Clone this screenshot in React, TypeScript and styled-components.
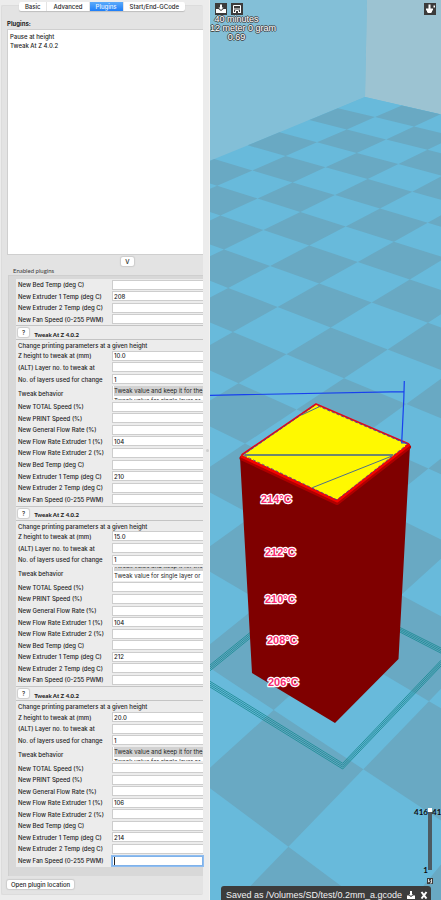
import React, { useId } from 'react';
import styled, { createGlobalStyle, css } from 'styled-components';

const GlobalStyle = createGlobalStyle`
  *, *::before, *::after { box-sizing: border-box; }
  body { margin: 0; background: #ececec; }
  button, input { font: inherit; color: inherit; margin: 0; }
`;

const Window = styled.div`
  display: grid;
  grid-template-columns: 10fr 11fr;
  min-height: 100vh;
  overflow: hidden;
  font-family: Inter, 'Open Sans', sans-serif;
  font-size: 6px;
  font-weight: 500;
  line-height: 9px;
  color: #1c1c1c;
`;

/* ---------- settings side ---------- */

const Settings = styled.aside`
  display: grid;
  grid-template-columns: 1fr 6px;
  min-width: 0;
  background: #ececec;
  border-right: 1px solid #f4f2f0;
`;

const Sash = styled.div`
  display: flex;
  align-items: center;
  justify-content: flex-end;
  &::after {
    content: '';
    width: 3px;
    height: 3px;
    border-radius: 50%;
    background: #cfcfcf;
  }
`;

const Notebook = styled.div`
  display: flex;
  flex-direction: column;
  min-width: 0;
  padding: 2px 0 5px 1px;
`;

const TabBar = styled.div`
  display: flex;
  align-self: center;
  height: 9px;
  margin-bottom: -6px;
  z-index: 1;
  border-radius: 2px;
  background: #fff;
  box-shadow: 0 1px 1px #bdbdbd;
`;

const Tab = styled.button<{ $active?: boolean }>`
  border: 0;
  padding: 0 6px;
  background: ${p => (p.$active ? 'linear-gradient(#5cabfa, #1e7ef8)' : 'transparent')};
  color: ${p => (p.$active ? '#e8f3ff' : '#262626')};
  white-space: nowrap;
  line-height: 9px;
  & + & { border-left: 1px solid #e4e4e4; }
  &:first-child { border-radius: 2px 0 0 2px; }
`;

const Page = styled.div`
  flex: 1;
  display: flex;
  flex-direction: column;
  padding: 13px 0 5px 5px;
  border-radius: 2px;
  border: 1px solid #dcdcdc;
  border-right: 0;
  background: #e3e3e3;
`;

const Heading = styled.div`
  font-size: 6px;
  font-weight: 700;
  line-height: 9px;
`;

const PluginList = styled.ul`
  list-style: none;
  margin: 1px 0 0;
  padding: 2px 2px;
  flex: 1;
  min-height: 224px;
  border: 1px solid #cfcfcf;
  border-right: 0;
  background: #fff;
`;

const MacButton = styled.button`
  border: 0;
  border-radius: 2px;
  padding: 0 4px;
  height: 9px;
  line-height: 9px;
  background: #fff;
  box-shadow: 0 0 1px 1px #cdcdcd;
  white-space: nowrap;
`;

const AddRow = styled.div`
  display: flex;
  justify-content: center;
  padding: 2px 0 0 45px;
`;

const Caption = styled.div`
  padding-left: 6px;
  font: 6px/9px Lato, sans-serif;
  color: #3a3a3a;
`;

const EnabledBox = styled.div`
  margin-left: 1px;
  padding: 3px 0 9px 7px;
  border: 1px solid #cfcfcf;
  border-width: 1px 0 0 1px;
  background: #d8d8d8;
`;

const Scrolled = styled.div`
  background: #ececec;
`;

const Sections = styled.div`
  display: grid;
  grid-template-rows: repeat(3, 1fr);
  height: 542px;
`;

const FieldStack = styled.div<{ $rows: number; $height: number }>`
  display: grid;
  grid-template-rows: repeat(${p => p.$rows}, 1fr);
  height: ${p => p.$height}px;
`;

const FieldRow = styled.div`
  display: grid;
  grid-template-columns: 96px 1fr;
  min-height: 0;
  align-items: center;
`;

const FieldLabel = styled.label`
  padding-left: 2px;
  white-space: nowrap;
`;

const Field = styled.input<{ $focused?: boolean }>`
  width: 100%;
  min-width: 0;
  height: 10px;
  padding: 0 1px;
  border: 1px solid #cdcdcd;
  border-right: 0;
  background: #fff;
  outline: 0;
  line-height: 8px;
  ${p => p.$focused && css`
    border: 1px solid #7fb2ea;
    box-shadow: 0 0 0 1px #8fbdf0;
    background: linear-gradient(#222, #222) 1px center / 1px 8px no-repeat #fff;
  `}
`;

const Section = styled.section`
  border-top: 1px solid #c4c4c4;
`;

const SectionTitle = styled.div`
  display: flex;
  align-items: center;
  gap: 5px;
  height: 14px;
  padding: 0 2px;
  border-bottom: 1px solid #c4c4c4;
`;

const SectionName = styled.span`
  padding-top: 3px;
  font: 900 6px/9px Lato, sans-serif;
`;

const Description = styled.div`
  height: 10px;
  padding-left: 2px;
  line-height: 12px;
  white-space: nowrap;
`;

const BehaviorRow = styled(FieldRow)`
  height: 16px;
`;

const Choices = styled.ul<{ $atEnd?: boolean }>`
  display: flex;
  flex-direction: column;
  justify-content: ${p => (p.$atEnd ? 'flex-end' : 'flex-start')};
  height: 14px;
  margin: 0;
  padding: 0 0 0 1px;
  list-style: none;
  overflow: hidden;
  min-width: 0;
  background: #fff;
  border-left: 1px solid #cdcdcd;
`;

const Choice = styled.li`
  flex: none;
  height: 10px;
  line-height: 10px;
  font-weight: 400;
  white-space: nowrap;
  &[aria-selected='true'] { background: #d2d2d2; }
`;

const Footer = styled.div`
  padding-top: 4px;
`;

/* ---------- 3D view side ---------- */

const Viewport = styled.main`
  position: relative;
  min-width: 0;
  display: flex;
  flex-direction: column;
  overflow: hidden;
  background: #68badb;
`;

const Scene = styled.svg`
  position: absolute;
  inset: 0;
  width: 100%;
  height: 100%;
`;

const Tools = styled.div`
  position: relative;
  display: flex;
  gap: 4px;
  padding: 3px 5px 0;
`;

const ToolButton = styled.button<{ $end?: boolean }>`
  width: 12px;
  height: 12px;
  padding: 0;
  border: 0;
  background: #3b3b3b;
  margin-left: ${p => (p.$end ? 'auto' : '0')};
  svg { display: block; width: 12px; height: 12px; }
`;

const Stats = styled.div`
  position: relative;
  width: 53px;
  display: flex;
  flex-direction: column;
  align-items: center;
  font: 9px/9px 'Liberation Sans', sans-serif;
  color: #fff;
  white-space: nowrap;
  text-shadow: 1px 0 #444, -1px 0 #444, 0 1px #444, 0 -1px #444;
`;

const WideStat = styled.span`
  align-self: flex-start;
`;

const Spacer = styled.div`
  flex: 1;
`;

const Layers = styled.div`
  position: relative;
  display: grid;
  grid-template-columns: 14px 4px 14px;
  align-self: flex-end;
  height: 66px;
  margin: 0 -5px 4px 0;
  font: 700 8px/8px Lato, sans-serif;
  color: #0c0c0c;
`;

const LayerNumbers = styled.div`
  display: flex;
  flex-direction: column;
  justify-content: space-between;
  text-align: right;
`;

const LayerSlider = styled.input`
  appearance: none;
  writing-mode: vertical-lr;
  direction: rtl;
  width: 4px;
  height: 62px;
  background: #4d5b62;
  &::-webkit-slider-thumb {
    appearance: none;
    width: 4px;
    height: 4px;
    background: #fff;
  }
`;

const CameraButton = styled.button`
  position: relative;
  align-self: flex-end;
  width: 6px;
  height: 6px;
  margin: 0 8px 2px 0;
  padding: 0;
  border: 0;
  background: #3b3b3b;
  svg { display: block; width: 6px; height: 6px; }
`;

const Toast = styled.div`
  position: relative;
  display: flex;
  align-items: center;
  gap: 5px;
  height: 14px;
  margin: 0 10px 0 11px;
  padding: 4px 5px 0;
  border-radius: 3px 3px 0 0;
  background: #3c3c3c;
  color: #f2f2f2;
  font: 9px/10px 'Liberation Sans', sans-serif;
  white-space: nowrap;
`;

const ToastText = styled.span`
  flex: 1;
`;

const ToastButton = styled.button`
  border: 0;
  padding: 0;
  background: none;
  svg { display: block; width: 8px; height: 8px; }
`;

/* ---------- data ---------- */

const SPEED_FIELDS = [
  'New TOTAL Speed (%)',
  'New PRINT Speed (%)',
  'New General Flow Rate (%)',
  'New Flow Rate Extruder 1 (%)',
  'New Flow Rate Extruder 2 (%)',
];

const TEMP_FIELDS = [
  'New Bed Temp (deg C)',
  'New Extruder 1 Temp (deg C)',
  'New Extruder 2 Temp (deg C)',
  'New Fan Speed (0-255 PWM)',
];

type Tweak = { height: string; flow: string; temp: string; atEnd?: boolean; fanFocused?: boolean };

const TWEAKS: Tweak[] = [
  { height: '10.0', flow: '104', temp: '210' },
  { height: '15.0', flow: '104', temp: '212', atEnd: true },
  { height: '20.0', flow: '106', temp: '214', fanFocused: true },
];

/* ---------- settings components ---------- */

function FormField({ label, value = '', focused }: { label: string; value?: string; focused?: boolean }) {
  const id = useId();
  return (
    <FieldRow>
      <FieldLabel htmlFor={id}>{label}</FieldLabel>
      <Field id={id} type="text" defaultValue={value} $focused={focused} />
    </FieldRow>
  );
}

function TweakSection({ height, flow, temp, atEnd, fanFocused }: Tweak) {
  const id = useId();
  return (
    <Section>
      <SectionTitle>
        <MacButton type="button" aria-label="Help">?</MacButton>
        <SectionName>Tweak At Z 4.0.2</SectionName>
      </SectionTitle>
      <Description>Change printing parameters at a given height</Description>
      <FieldStack $rows={3} $height={35}>
        <FormField label="Z height to tweak at (mm)" value={height} />
        <FormField label="(ALT) Layer no. to tweak at" />
        <FormField label="No. of layers used for change" value="1" />
      </FieldStack>
      <BehaviorRow>
        <FieldLabel as="span" id={id}>Tweak behavior</FieldLabel>
        <Choices role="listbox" aria-labelledby={id} $atEnd={atEnd}>
          <Choice role="option" aria-selected="true">Tweak value and keep it for the</Choice>
          <Choice role="option" aria-selected="false">Tweak value for single layer or</Choice>
        </Choices>
      </BehaviorRow>
      <FieldStack $rows={9} $height={104}>
        {SPEED_FIELDS.map((label, i) => (
          <FormField key={label} label={label} value={i === 3 ? flow : ''} />
        ))}
        {TEMP_FIELDS.map((label, i) => (
          <FormField key={label} label={label} value={i === 1 ? temp : ''} focused={i === 3 && fanFocused} />
        ))}
      </FieldStack>
    </Section>
  );
}

/* ---------- scene ---------- */

// Perspective projection of floor grid coordinates, origin at the back corner.
function project(i: number, j: number) {
  const w = 1 - 0.024579 * i - 0.023001 * j;
  const x = (365 - 35.413 * i + 27.603 * j) / w;
  const y = (97 + 8.504 * i + 6.041 * j) / w;
  return `${x.toFixed(1)} ${y.toFixed(1)}`;
}

const quad = (i: number, j: number, w = 1, h = 1) =>
  `M${project(i, j)}L${project(i + w, j)}L${project(i + w, j + h)}L${project(i, j + h)}Z`;

const darkTiles: string[] = [];
for (let i = 0; i < 19; i++) {
  for (let j = 0; j < 15; j++) {
    if ((i + j) % 2) darkTiles.push(quad(i, j));
  }
}

const TEMPERATURES = [
  { text: '214°C', x: 261, y: 503 },
  { text: '212°C', x: 265, y: 556 },
  { text: '210°C', x: 265, y: 603 },
  { text: '208°C', x: 267, y: 644 },
  { text: '206°C', x: 268, y: 686 },
];

function PrintScene() {
  return (
    <Scene viewBox="210 0 231 900" preserveAspectRatio="xMidYMid slice" aria-label="Layer view">
      <path d="M-200 0H367L365 97L-200 334Z" fill="#83bfd7" />
      <path d="M367 0H900V220L365 97Z" fill="#9cc3d2" />
      <path d={quad(0, 0, 19, 15)} fill="#68badb" />
      <path d={darkTiles.join('')} fill="#69a9c3" />
      <g fill="none" stroke="#1f8c96" strokeWidth=".9">
        {[0, 1, 2, 3].map(n => {
          const o = n * 1.9;
          return (
            <path
              key={n}
              d={`M252 ${631 + o}L210 ${665 + o}M210 ${687 - o}L342.7 ${769 - o}L441 ${666 - o}M396 ${625.5 + o * 0.8}L441 ${648 + o * 0.9}`}
            />
          );
        })}
      </g>
      <path d="M240 457L337 503L410 446L398.5 659L335 723L252 673Z" fill="#7f0000" />
      <path d="M241.5 456.5L316 404.5L408.5 445L337 501Z" fill="#fff900" />
      <path d="M242 458L337 502.500L408.500 447" fill="none" stroke="#b00000" strokeWidth="5" strokeLinejoin="round" strokeLinecap="round" />
      <path d="M242 456.500L337 501L408.500 445" fill="none" stroke="#f20500" strokeWidth="3" strokeLinejoin="round" strokeLinecap="round" />
      <path d="M241.5 455L316 404L409 444" fill="none" stroke="#e00a18" strokeWidth="1.6" strokeLinejoin="round" />
      <path d="M244 455.500L337 499L405 446" fill="none" stroke="#fff900" strokeWidth="1" />
      <path d="M244 455.500L337 499.800L406 445.500M318 406L408 444.500M243 455L314 406" fill="none" stroke="#4836a0" strokeWidth=".8" strokeDasharray="3 2" />
      <g fill="none" stroke="#4d6f8a" strokeWidth="1">
        <path d="M319.300 406.700L301.700 415" />
        <path d="M392 456L312.300 487.700" />
        <path d="M245 455H393" stroke="#3f6290" strokeWidth="1.500" />
      </g>
      <path d="M210 395.300L404 391.700M404.300 381L403.800 399L401.700 443H406" fill="none" stroke="#1740ee" strokeWidth="1.200" />
      <g
        fontFamily="'Liberation Sans', sans-serif"
        fontWeight="700"
        fontSize="11"
        fill="#f82a70"
        stroke="#fff"
        strokeWidth="2.500"
        strokeLinejoin="round"
        paintOrder="stroke"
      >
        {TEMPERATURES.map(t => (
          <text key={t.text} x={t.x} y={t.y}>{t.text}</text>
        ))}
      </g>
    </Scene>
  );
}

const LoadIcon = () => (
  <svg viewBox="0 0 12 12" fill="#fff">
    <path d="M5 1.500h2v3h1.500L6 7 3.500 4.500H5zM1 6h2.500L6 8l2.500-2H11v4H1z" />
  </svg>
);

const SaveIcon = () => (
  <svg viewBox="0 0 12 12" fill="none" stroke="#fff">
    <path d="M2.500 10V2.500h7V10M4.500 10V7.500h3V10M3 6h6M2 9.500h3M7 9.500h3" />
  </svg>
);

const ViewIcon = () => (
  <svg viewBox="0 0 12 12" fill="#fff">
    <path d="M4.500 1.500h2v4h2.500v2H8v1.500L7 10H4L3 9V7.500H2v-2h2.500zM9.500 2.500h1.500v2H9.500z" />
  </svg>
);

export default function App() {
  return (
    <Window>
      <GlobalStyle />
      <Settings>
        <Notebook>
          <TabBar role="tablist">
            <Tab type="button" role="tab">Basic</Tab>
            <Tab type="button" role="tab">Advanced</Tab>
            <Tab type="button" role="tab" aria-selected="true" $active>Plugins</Tab>
            <Tab type="button" role="tab">Start/End-GCode</Tab>
          </TabBar>
          <Page>
            <Heading>Plugins:</Heading>
            <PluginList>
              <li>Pause at height</li>
              <li>Tweak At Z 4.0.2</li>
            </PluginList>
            <AddRow><MacButton type="button">V</MacButton></AddRow>
            <Caption>Enabled plugins</Caption>
            <EnabledBox>
              <Scrolled>
                <FieldStack $rows={4} $height={46}>
                  {TEMP_FIELDS.map((label, i) => (
                    <FormField key={label} label={label} value={i === 1 ? '208' : ''} />
                  ))}
                </FieldStack>
                <Sections>
                  {TWEAKS.map(t => <TweakSection key={t.height} {...t} />)}
                </Sections>
              </Scrolled>
            </EnabledBox>
            <Footer><MacButton type="button">Open plugin location</MacButton></Footer>
          </Page>
        </Notebook>
        <Sash />
      </Settings>
      <Viewport>
        <PrintScene />
        <Tools>
          <ToolButton type="button" aria-label="Load"><LoadIcon /></ToolButton>
          <ToolButton type="button" aria-label="Save"><SaveIcon /></ToolButton>
          <ToolButton type="button" aria-label="View mode" $end><ViewIcon /></ToolButton>
        </Tools>
        <Stats>
          <span>40 minutes</span>
          <WideStat>12 meter 0 gram</WideStat>
          <span>0.69</span>
        </Stats>
        <Spacer />
        <Layers>
          <LayerNumbers><span>416</span><span>1</span></LayerNumbers>
          <LayerSlider type="range" min="1" max="416" defaultValue="416" aria-label="Layer" />
          <span>416</span>
        </Layers>
        <CameraButton type="button" aria-label="Camera">
          <svg viewBox="0 0 6 6" fill="none" stroke="#fff" strokeWidth=".8"><path d="M1.500 1v3l2-1.500M4.500 1v4H3" /></svg>
        </CameraButton>
        <Toast>
          <ToastText>Saved as /Volumes/SD/test/0.2mm_a.gcode</ToastText>
          <ToastButton type="button" aria-label="Eject">
            <svg viewBox="0 0 8 8" fill="#fff"><path d="M3 0h2v3h1L4 5 2 3h1zM0 4.500h2L4 6l2-1.500h2V8H0z" /></svg>
          </ToastButton>
          <ToastButton type="button" aria-label="Close">
            <svg viewBox="0 0 8 8" stroke="#fff" strokeWidth="2"><path d="M1.500 1l5 6.500M6.500 1l-5 6.500" /></svg>
          </ToastButton>
        </Toast>
      </Viewport>
    </Window>
  );
}
